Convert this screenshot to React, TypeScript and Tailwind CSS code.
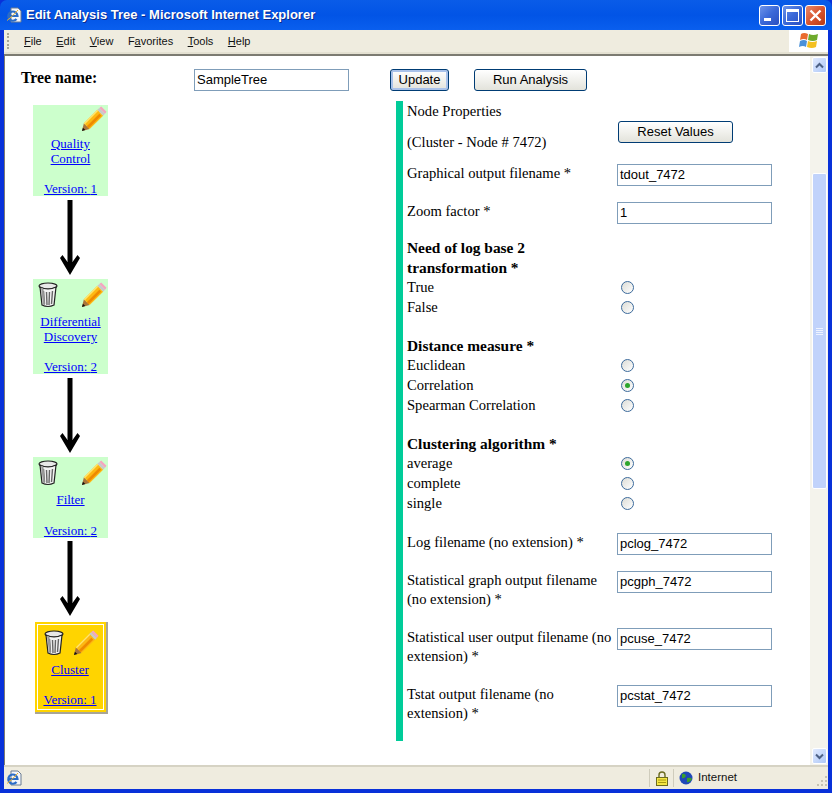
import React from "react";

const Pencil = ({ className = "" }: { className?: string }) => (
  <svg width="26" height="26" viewBox="0 0 27 27" className={className}>
    <polygon points="1,26 3,18 9,24" fill="#a9743a" />
    <polygon points="1,26 2,22.5 4.5,25" fill="#111" />
    <polygon points="3,18 17,4 23,10 9,24" fill="#fdb813" />
    <polygon points="6,21 19,8 21,10 8,23" fill="#ee8a00" />
    <polygon points="3,18 17,4 18,5 4,19" fill="#ffe56e" />
    <polygon points="17,4 19,2 25,8 23,10" fill="#c9c9c9" />
    <polygon points="19,2 21,0.5 26.5,6 25,8" fill="#f4a6c0" />
  </svg>
);

const Trash = () => (
  <svg width="20" height="26" viewBox="0 0 20 26">
    <ellipse cx="10" cy="4" rx="9" ry="3" fill="#e8e8e8" stroke="#222" strokeWidth="1.2" />
    <path d="M2 5 L4 23 Q10 26 16 23 L18 5 Q10 9 2 5Z" fill="#f2f2f2" stroke="#222" strokeWidth="1.2" />
    <path d="M5.5 9 L6.5 22 M8.5 10 L9 23 M11.5 10 L11 23 M14.5 9 L13.5 22" stroke="#666" strokeWidth="1.4" fill="none" />
    <path d="M3 5.5 L5 22.5 L7 23.5 L5.5 7Z" fill="#999" />
  </svg>
);

const Arrow = () => (
  <svg width="22" height="76" viewBox="0 0 22 76" className="mr-[1px] block">
    <rect x="8.5" y="0" width="5" height="66" fill="#000" />
    <path d="M11 75 L1 58 L3.5 55 L8.5 62 H13.5 L18.5 55 L21 58 Z" fill="#000" />
  </svg>
);

const NodeLink = ({ children }: { children: React.ReactNode }) => (
  <a className="block text-[13px] leading-[15px] text-[#0000ff] underline">{children}</a>
);

const TreeNode = ({
  title,
  version,
  trash,
  h,
}: {
  title: string[];
  version: number;
  trash?: boolean;
  h: string;
}) => (
  <div className={`w-[75px] bg-[#ccffcc] flex flex-col items-center ${h}`}>
    <div
      className={`flex w-full items-end justify-between pl-[5px] pr-[1px] ${trash ? "h-[29px]" : "h-[27px]"}`}
    >
      <span className="w-[20px]">{trash && <Trash />}</span>
      <Pencil />
    </div>
    <div className={`text-center ${trash ? "mt-[6px]" : "mt-[4px]"}`}>
      {title.map((t) => (
        <NodeLink key={t}>{t}</NodeLink>
      ))}
    </div>
    <div className="mt-auto">
      <NodeLink>Version: {version}</NodeLink>
    </div>
  </div>
);

const XPInput = ({ value, w = "w-[155px]" }: { value: string; w?: string }) => (
  <div
    className={`${w} h-[22px] border border-[#7f9db9] bg-white pl-[2px] text-[13px] leading-[20px] text-black font-['Liberation_Sans',sans-serif]`}
  >
    {value}
  </div>
);

const XPButton = ({ children, w, focus }: { children: string; w: string; focus?: boolean }) => (
  <div
    className={`${w} h-[22px] rounded-[3px] border border-[#003c74] bg-gradient-to-b from-white to-[#e3e3db] text-center text-[13px] leading-[20px] text-black font-['Liberation_Sans',sans-serif] ${
      focus ? "shadow-[inset_0_0_0_2px_#a9c2ea]" : ""
    }`}
  >
    {children}
  </div>
);

const Radio = ({ on }: { on?: boolean }) => (
  <span className="relative mb-[2px] block size-[13px] rounded-full border border-[#3c6a9b] bg-gradient-to-br from-[#dcdcd6] to-white">
    {on && <span className="absolute left-[3px] top-[3px] size-[5px] rounded-full bg-[#2ca52c]" />}
  </span>
);

const RadioRow = ({ label, on }: { label: string; on?: boolean }) => (
  <div className="flex h-[20px] items-center">
    <span className="w-[214px]">{label}</span>
    <Radio on={on} />
  </div>
);

const FieldRow = ({
  label,
  value,
  mt,
  h = "h-[22px]",
}: {
  label: React.ReactNode;
  value: string;
  mt: string;
  h?: string;
}) => (
  <div className={`flex items-start ${mt} ${h}`}>
    <div className="w-[210px] leading-[19px]">{label}</div>
    <XPInput value={value} />
  </div>
);

const Section = ({ title, mt }: { title: React.ReactNode; mt: string }) => (
  <div className={`${mt} text-[15.4px] font-bold leading-[20px]`}>{title}</div>
);

const WinBtn = ({ kind }: { kind: "min" | "max" | "close" }) => (
  <div
    className={`flex size-[21px] items-center justify-center rounded-[3px] border border-white ${
      kind === "close"
        ? "bg-gradient-to-br from-[#e8886a] via-[#d9552e] to-[#b93a12]"
        : "bg-gradient-to-br from-[#6d93ea] via-[#3a68d8] to-[#2a4fc0]"
    }`}
  >
    {kind === "min" && <div className="mt-[8px] mr-[4px] h-[3px] w-[7px] bg-white" />}
    {kind === "max" && <div className="h-[13px] w-[13px] border border-t-[3px] border-white" />}
    {kind === "close" && (
      <svg width="13" height="13" viewBox="0 0 13 13">
        <path d="M1.5 1.5 L11.5 11.5 M11.5 1.5 L1.5 11.5" stroke="#fff" strokeWidth="2.4" />
      </svg>
    )}
  </div>
);

const Menu = ({ pre = "", u, post }: { pre?: string; u: string; post: string }) => (
  <span>
    {pre}
    <span className="underline">{u}</span>
    {post}
  </span>
);

const Chevron = ({ up }: { up?: boolean }) => (
  <svg width="9" height="7" viewBox="0 0 9 7">
    <path d={up ? "M1 5.5 L4.5 2 L8 5.5" : "M1 1.5 L4.5 5 L8 1.5"} stroke="#4d6185" strokeWidth="2" fill="none" />
  </svg>
);

const ScrollBtn = ({ up }: { up?: boolean }) => (
  <div className="flex h-[16px] w-[15px] items-center justify-center rounded-[2px] border border-white bg-gradient-to-br from-[#e1eafe] to-[#aec8f7]">
    <Chevron up={up} />
  </div>
);

const IEPage = () => (
  <svg width="16" height="16" viewBox="0 0 16 16">
    <path d="M5 1 H12 L15 4 V15 H5Z" fill="#f4f6fb" stroke="#6b7c93" />
    <path d="M2.5 9 H11.5 A4.6 4.6 0 1 0 10.5 12" fill="none" stroke="#2a6cc8" strokeWidth="2.2" />
    <path d="M1 13.5 Q6 10 12 3" stroke="#e8b030" strokeWidth="1" fill="none" />
  </svg>
);

export default function App() {
  return (
    <div className="flex h-[793px] w-[832px] flex-col overflow-hidden bg-[#0831d9] font-['Liberation_Serif',serif] text-[14.6px] text-black">
      {/* title bar */}
      <div className="flex h-[30px] shrink-0 items-center rounded-t-[7px] bg-gradient-to-b from-[#0a5ce8] via-[#0254e6] to-[#0a5fee] pl-[6px] pr-[6px]">
        <IEPage />
        <span className="ml-[4px] font-['Liberation_Sans',sans-serif] text-[13px] font-bold text-white [text-shadow:1px_1px_0_#0a2a8c]">
          Edit Analysis Tree - Microsoft Internet Explorer
        </span>
        <div className="ml-auto flex gap-[2px]">
          <WinBtn kind="min" />
          <WinBtn kind="max" />
          <WinBtn kind="close" />
        </div>
      </div>

      {/* window body */}
      <div className="flex min-h-0 flex-1 flex-col px-[4px] pb-[4px]">
        {/* menu */}
        <div className="flex h-[22px] shrink-0 items-center bg-[#efecdf] pl-[3px] font-['Liberation_Sans',sans-serif] text-[11px] text-[#111]">
          <div className="mr-[15px] h-[16px] w-[2px] border-l-2 border-dotted border-[#a8a596]" />
          <div className="flex gap-[14.5px]">
            <Menu u="F" post="ile" />
            <Menu u="E" post="dit" />
            <Menu u="V" post="iew" />
            <Menu pre="F" u="a" post="vorites" />
            <Menu u="T" post="ools" />
            <Menu u="H" post="elp" />
          </div>
          <div className="ml-auto flex h-full w-[39px] items-center justify-center bg-white">
            <svg width="22" height="20" viewBox="0 0 22 20">
              <path d="M3 3 Q6 1 10 3 L9 9 Q6 7 2 9Z" fill="#ea6a2e" />
              <path d="M11 3 Q15 5 20 3 L19 9 Q15 11 10 9Z" fill="#6eaa2c" />
              <path d="M2 10 Q6 8 9 10 L8 16 Q5 14 1 16Z" fill="#4a90d9" />
              <path d="M10 10 Q14 12 19 10 L18 16 Q14 18 9 16Z" fill="#f4c020" />
            </svg>
          </div>
        </div>
        <div className="h-[2px] shrink-0 bg-[#e4e1d2]" />
        <div className="h-[2px] shrink-0 bg-[#7c7b72]" />

        {/* page */}
        <div className="flex min-h-0 flex-1 border-l border-[#7c7b72] bg-white">
          <div className="relative flex-1 overflow-hidden">
            <div className="flex h-[45px] items-start pt-[13px]">
              <div className="ml-[16px] w-[173px] text-[15.8px] leading-[18px] font-bold">Tree name:</div>
              <XPInput value="SampleTree" w="w-[155px]" />
              <div className="ml-[41px] flex gap-[25px]">
                <XPButton w="w-[59px]" focus>
                  Update
                </XPButton>
                <XPButton w="w-[113px]">Run Analysis</XPButton>
              </div>
            </div>

            <div className="flex">
              {/* tree */}
              <div className="flex w-[391px] shrink-0 flex-col items-start">
                <div className="ml-[28px] flex w-[75px] flex-col items-center pt-[4px]">
                  <TreeNode title={["Quality", "Control"]} version={1} h="h-[91px]" />
                  <div className="mt-[4px]"><Arrow /></div>
                  <div className="mt-[3px]">
                    <TreeNode title={["Differential", "Discovery"]} version={2} trash h="h-[95px]" />
                  </div>
                  <div className="mt-[4px]"><Arrow /></div>
                  <div className="mt-[3px]">
                    <TreeNode title={["Filter"]} version={2} trash h="h-[81px]" />
                  </div>
                  <div className="mt-[3px]"><Arrow /></div>
                  <div className="mt-[5px] ml-[1px] box-content size-fit border-r-2 border-b-2 border-[#a8a596]">
                    <div className="flex h-[90px] w-[71px] flex-col items-center border-2 border-[#ffd400] bg-[#ffd400] pb-[3px] outline outline-1 -outline-offset-3 outline-white">
                      <div className="flex h-[32px] w-full items-end justify-between pl-[7px] pr-[5px]">
                        <Trash />
                        <Pencil />
                      </div>
                      <div className="mt-[6px]"><NodeLink>Cluster</NodeLink></div>
                      <div className="mt-auto"><NodeLink>Version: 1</NodeLink></div>
                    </div>
                  </div>
                </div>
              </div>

              {/* properties */}
              <div className="h-[640px] w-[411px] shrink-0 border-l-[7px] border-[#00cc99] pl-[4px]">
                <div className="flex h-[42px]">
                  <div className="w-[211px] leading-[20px]">
                    <div>Node Properties</div>
                    <div className="mt-[11px]">(Cluster - Node # 7472)</div>
                  </div>
                  <div className="pt-[20px]">
                    <XPButton w="w-[115px]">Reset Values</XPButton>
                  </div>
                </div>
                <FieldRow mt="mt-[21px]" label="Graphical output filename *" value="tdout_7472" />
                <FieldRow mt="mt-[16px]" label="Zoom factor *" value="1" />
                <Section mt="mt-[14px]" title={<>Need of log base 2<br />transformation *</>} />
                <div>
                  <RadioRow label="True" />
                  <RadioRow label="False" />
                </div>
                <Section mt="mt-[18px]" title="Distance measure *" />
                <div>
                  <RadioRow label="Euclidean" />
                  <RadioRow label="Correlation" on />
                  <RadioRow label="Spearman Correlation" />
                </div>
                <Section mt="mt-[18px]" title="Clustering algorithm *" />
                <div>
                  <RadioRow label="average" on />
                  <RadioRow label="complete" />
                  <RadioRow label="single" />
                </div>
                <FieldRow mt="mt-[19px]" label="Log filename (no extension) *" value="pclog_7472" />
                <FieldRow mt="mt-[16px]" h="h-[38px]" label={<>Statistical graph output filename<br />(no extension) *</>} value="pcgph_7472" />
                <FieldRow mt="mt-[19px]" h="h-[38px]" label={<>Statistical user output filename (no<br />extension) *</>} value="pcuse_7472" />
                <FieldRow mt="mt-[19px]" h="h-[38px]" label={<>Tstat output filename (no<br />extension) *</>} value="pcstat_7472" />
              </div>
            </div>
          </div>

          {/* scrollbar */}
          <div className="flex w-[18px] shrink-0 flex-col items-center bg-[#f4f3ec] pt-[1px] pb-[1px]">
            <ScrollBtn up />
            <div className="mt-[100px] flex h-[316px] w-[15px] items-center justify-center rounded-[2px] border border-white bg-[#c1d3fb]">
              <div className="flex w-[7px] flex-col gap-[1px]">
                <div className="h-px bg-[#eef3ff]" />
                <div className="h-px bg-[#eef3ff]" />
                <div className="h-px bg-[#eef3ff]" />
                <div className="h-px bg-[#eef3ff]" />
              </div>
            </div>
            <div className="mt-auto"><ScrollBtn /></div>
          </div>
        </div>

        {/* status */}
        <div className="h-[2px] shrink-0 bg-[#d6d3c4]" />
        <div className="flex h-[22px] shrink-0 items-center bg-[#efecdf] pl-[2px] font-['Liberation_Sans',sans-serif] text-[11.5px] text-[#111]">
          <IEPage />
          <div className="ml-auto flex h-full items-center">
            <div className="flex h-[18px] w-[24px] items-center justify-center border-l border-[#cfccbc]">
              <svg width="12" height="15" viewBox="0 0 12 15">
                <path d="M3 7 V4 Q3 1 6 1 Q9 1 9 4 V7" fill="none" stroke="#6b6b20" strokeWidth="1.4" />
                <rect x="0.5" y="6.5" width="11" height="8" fill="#f5e642" stroke="#6b6b20" />
                <path d="M2 9 H10 M2 11.5 H10" stroke="#a89a10" />
              </svg>
            </div>
            <div className="flex h-[18px] w-[155px] items-center border-l border-[#cfccbc] pl-[5px]">
              <svg width="14" height="14" viewBox="0 0 14 14">
                <circle cx="7" cy="7" r="6.5" fill="#2048b8" />
                <path d="M3 3 Q6 2 7 5 Q5 8 3 7Z M8 7 Q12 6 13 8 Q11 12 8 11Z" fill="#3aa02c" />
              </svg>
              <span className="ml-[5px]">Internet</span>
              <svg width="12" height="12" viewBox="0 0 12 12" className="ml-auto mt-[6px]">
                <path d="M9 1h2v2H9z M5 5h2v2H5z M9 5h2v2H9z M1 9h2v2H1z M5 9h2v2H5z M9 9h2v2H9z" fill="#c5c2b3" />
              </svg>
            </div>
          </div>
        </div>
      </div>
    </div>
  );
}
